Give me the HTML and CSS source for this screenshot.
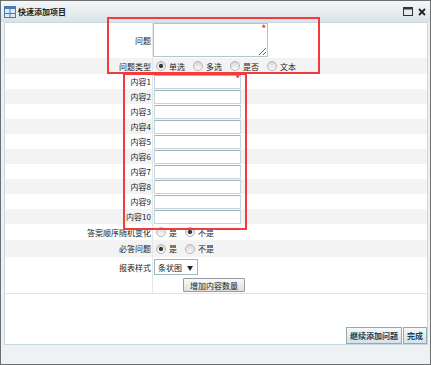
FILE: index.html
```html
<!DOCTYPE html>
<html lang="zh-CN">
<head>
    <meta charset="UTF-8">
    <title>快速添加项目</title>
    <link rel="stylesheet" href="styles.css">
</head>
<body>
    <div class="window">
        <div class="titlebar">
            <svg class="title-icon" width="12" height="12" viewBox="0 0 12 12">
                <rect x="0.5" y="0.5" width="11" height="11" fill="#dce9f6" stroke="#4a7cb2"/>
                <rect x="1" y="1" width="10" height="2" fill="#4a7cb2"/>
                <path d="M6 3V11M1 7.5h10" stroke="#4a7cb2"/>
            </svg>
            <span class="title">快速添加项目</span>
            <span class="tools">
                <svg width="10" height="9" viewBox="0 0 10 9">
                    <rect x="0.5" y="0.5" width="9" height="8" fill="none" stroke="#333"/>
                    <rect x="0" y="0" width="10" height="2.5" fill="#333"/>
                </svg>
                <svg width="8" height="8" viewBox="0 0 8 8">
                    <path d="M1 1l6 6M7 1L1 7" stroke="#222" stroke-width="1.8"/>
                </svg>
            </span>
        </div>

        <div class="frame">
            <div class="content">
                <div class="form">
                    <div class="row row-q">
                        <div class="label">问题</div>
                        <div class="field field-top">
                            <span class="req-wrap">
                                <textarea class="question"></textarea>
                                <i class="req req-area">*</i>
                            </span>
                        </div>
                    </div>
                    <div class="row row-type alt">
                        <div class="label">问题类型</div>
                        <div class="field">
                            <label class="opt"><input class="radio" type="radio" name="type" checked>单选</label>
                            <label class="opt"><input class="radio" type="radio" name="type">多选</label>
                            <label class="opt"><input class="radio" type="radio" name="type">是否</label>
                            <label class="opt"><input class="radio" type="radio" name="type">文本</label>
                        </div>
                    </div>
                    <div class="row row-item">
                        <div class="label">内容1</div>
                        <div class="field">
                            <span class="req-wrap">
                                <input class="text" type="text">
                                <i class="req req-input">*</i>
                            </span>
                        </div>
                    </div>
                    <div class="row row-item alt"><div class="label">内容2</div><div class="field"><input class="text" type="text"></div></div>
                    <div class="row row-item"><div class="label">内容3</div><div class="field"><input class="text" type="text"></div></div>
                    <div class="row row-item alt"><div class="label">内容4</div><div class="field"><input class="text" type="text"></div></div>
                    <div class="row row-item"><div class="label">内容5</div><div class="field"><input class="text" type="text"></div></div>
                    <div class="row row-item alt"><div class="label">内容6</div><div class="field"><input class="text" type="text"></div></div>
                    <div class="row row-item"><div class="label">内容7</div><div class="field"><input class="text" type="text"></div></div>
                    <div class="row row-item alt"><div class="label">内容8</div><div class="field"><input class="text" type="text"></div></div>
                    <div class="row row-item"><div class="label">内容9</div><div class="field"><input class="text" type="text"></div></div>
                    <div class="row row-item alt"><div class="label">内容10</div><div class="field"><input class="text" type="text"></div></div>
                    <div class="row row-random">
                        <div class="label">答案顺序随机变化</div>
                        <div class="field">
                            <label class="opt"><input class="radio" type="radio" name="random">是</label>
                            <label class="opt"><input class="radio" type="radio" name="random" checked>不是</label>
                        </div>
                    </div>
                    <div class="row row-must alt">
                        <div class="label">必答问题</div>
                        <div class="field">
                            <label class="opt"><input class="radio" type="radio" name="must" checked>是</label>
                            <label class="opt"><input class="radio" type="radio" name="must">不是</label>
                        </div>
                    </div>
                    <div class="row row-style">
                        <div class="label">报表样式</div>
                        <div class="field">
                            <div class="select">条状图<span class="arrow">▼</span></div>
                        </div>
                    </div>
                    <div class="row row-btn">
                        <div class="label"></div>
                        <div class="field">
                            <button class="btn-add" type="button">增加内容数量</button>
                        </div>
                    </div>
                </div>

                <div class="actions">
                    <button class="btn-blue" type="button">继续添加问题</button><button class="btn-blue" type="button">完成</button>
                </div>
            </div>
        </div>

        <!-- annotation boxes -->
        <div class="mark mark-1"></div>
        <div class="mark mark-2"></div>
    </div>
</body>
</html>
```

FILE: styles.css
```css
body {
    margin: 0;
    font-family: "Noto Sans CJK SC", "Liberation Sans", sans-serif;
    font-size: 8px;
    color: #222;
}

.window {
    position: relative;
    width: 431px;
    height: 365px;
    box-sizing: border-box;
    border: 1px solid #6e6e6e;
    background: #eef2f4;
    display: flex;
    flex-direction: column;
}

.titlebar {
    height: 21px;
    flex: none;
    display: flex;
    align-items: center;
    padding: 0 3px;
    background: linear-gradient(#f5f7f9, #dbe3e8);
}

.title-icon {
    margin-right: 2px;
}

.title {
    font-weight: bold;
    color: #222;
}

.tools {
    margin-left: auto;
    display: flex;
    align-items: center;
    gap: 5px;
    padding-right: 1px;
}

.frame {
    flex: 1;
    padding: 0 2px 0 3px;
}

.content {
    height: 323px;
    box-sizing: border-box;
    border: 1px solid #c6d9e2;
    background: #fff;
    display: flex;
    flex-direction: column;
}

.form {
    border-bottom: 1px solid #e2e2e2;
}

.row {
    display: grid;
    grid-template-columns: 148px 1fr;
}

.row.alt {
    background: #f3f3f3;
}

.label {
    border-right: 1px solid #e6e6e6;
    display: flex;
    align-items: center;
    justify-content: flex-end;
    padding-right: 1px;
    white-space: nowrap;
}

.field {
    display: flex;
    align-items: center;
    padding-left: 1px;
}

.field-top {
    align-items: flex-start;
    padding-left: 0;
}

.row-q { height: 35px; }
.row-type { height: 16px; }
.row-item { height: 15px; }
.row-random { height: 16px; }
.row-must { height: 17px; }
.row-style { height: 20px; }
.row-btn { height: 16px; }

.req-wrap {
    position: relative;
    display: inline-flex;
}

.req {
    position: absolute;
    color: #ee2222;
    font-style: normal;
    font-weight: bold;
    font-size: 9px;
    line-height: 1;
}

.req-area {
    right: 2px;
    top: 1px;
}

.req-input {
    right: 1px;
    top: -1px;
}

.question {
    width: 115px;
    height: 34px;
    box-sizing: border-box;
    margin: 0;
    border: 1px solid #b3c6ce;
    font: inherit;
}

.text {
    width: 87px;
    height: 14px;
    box-sizing: border-box;
    margin: 0;
    padding: 0 2px;
    border: 1px solid #c5d5db;
    border-top-color: #a2b5bd;
    font: inherit;
}

.opt {
    display: flex;
    align-items: center;
    margin-left: 2px;
    margin-right: 6px;
}

.radio {
    appearance: none;
    width: 10px;
    height: 10px;
    margin: 0 3px 0 0;
    border: 1px solid #b5b5b5;
    border-radius: 50%;
    background: linear-gradient(#d6d6d6, #fbfbfb);
}

.radio:checked {
    background: radial-gradient(circle, #3a3a3a 0 1.8px, transparent 2.4px), linear-gradient(#d6d6d6, #fbfbfb);
}

.select {
    width: 44px;
    height: 16px;
    box-sizing: border-box;
    border: 1px solid #9db9c5;
    display: flex;
    align-items: center;
    padding-left: 3px;
    color: #222;
}

.arrow {
    font-size: 6px;
    margin-left: 5px;
}

.btn-add {
    margin: 0 0 0 29px;
    height: 14px;
    padding: 0 6px;
    font: inherit;
    color: #222;
    border: 1px solid #9a9a9a;
    border-radius: 1px;
    background: linear-gradient(#fafafa, #dedede);
}

.actions {
    margin-top: auto;
    display: flex;
    justify-content: flex-end;
}

.btn-blue {
    height: 17px;
    margin: 0 0 0 1px;
    padding: 0 3px;
    font: inherit;
    font-weight: bold;
    color: #1d3d55;
    border: 1px solid #8faab8;
    background: linear-gradient(#f4f8fa, #d6e1e7);
}

.mark {
    position: absolute;
    box-sizing: border-box;
    border: 2px solid #f43a3a;
    pointer-events: none;
}

.mark-1 {
    left: 106px;
    top: 16px;
    width: 213px;
    height: 57px;
}

.mark-2 {
    left: 122px;
    top: 72px;
    width: 124px;
    height: 157px;
}
```
